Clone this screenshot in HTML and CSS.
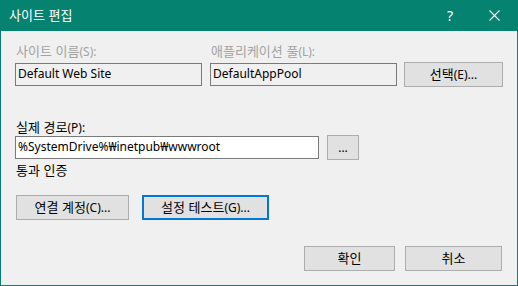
FILE: index.html
```html
<!DOCTYPE html>
<html lang="ko">
<head>
  <meta charset="UTF-8">
  <title>사이트 편집</title>
  <link rel="stylesheet" href="styles.css">
</head>
<body>
  <div class="window">
    <!-- Title bar -->
    <div class="titlebar">
      <span class="title"><span class="ko">사이트 편집</span></span>
      <span class="help">?</span>
      <svg class="close" width="11" height="11" viewBox="0 0 11 11">
        <path d="M0.5 0.5 L10.5 10.5 M10.5 0.5 L0.5 10.5" stroke="#fff" stroke-width="1.1" fill="none"/>
      </svg>
    </div>

    <div class="content">
      <!-- Site name / app pool -->
      <div class="top-row">
        <div class="field">
          <label class="disabled"><span class="ko">사이트 이름</span>(S):</label>
          <div class="textbox readonly">Default Web Site</div>
        </div>
        <div class="field">
          <label class="disabled"><span class="ko">애플리케이션 풀</span>(L):</label>
          <div class="textbox readonly">DefaultAppPool</div>
        </div>
        <button class="btn select-btn"><span class="ko">선택</span>(E)...</button>
      </div>

      <!-- Physical path -->
      <label class="path-label"><span class="ko">실제 경로</span>(P):</label>
      <div class="path-row">
        <div class="textbox path-box">%SystemDrive%₩inetpub₩wwwroot</div>
        <button class="btn browse-btn">...</button>
      </div>

      <label class="auth-label"><span class="ko">통과 인증</span></label>
      <div class="auth-row">
        <button class="btn connect-btn"><span class="ko">연결 계정</span>(C)...</button>
        <button class="btn test-btn focused"><span class="ko">설정 테스트</span>(G)...</button>
      </div>

      <div class="footer">
        <button class="btn ok-btn"><span class="ko">확인</span></button>
        <button class="btn cancel-btn"><span class="ko">취소</span></button>
      </div>
    </div>
  </div>
</body>
</html>
```

FILE: styles.css
```css
body {
  margin: 0;
  padding: 0;
  font-family: "Noto Sans", "Noto Sans CJK KR", sans-serif;
  font-size: 12px;
  color: #000;
  background: #f0f0f0;
}

/* Korean glyphs run a bit larger in the original UI font */
.ko {
  font-family: "Noto Sans CJK KR", sans-serif;
  font-size: 13px;
}

.window {
  width: 518px;
  height: 286px;
  box-sizing: border-box;
  border: 1px solid #058270;
  border-top: none;
  background: #f0f0f0;
}

/* Title bar */
.titlebar {
  height: 31px;
  margin: 0 -1px;
  background: #058270;
  color: #fff;
  display: flex;
  align-items: center;
  padding-left: 9px;
}

.title {
  flex: 1;
  line-height: 16px;
}

.help {
  font-family: "Noto Sans", sans-serif;
  font-size: 14px;
  margin-right: 36px;
  line-height: 16px;
}

.close {
  margin-right: 18px;
}

.content {
  padding: 12px 0 0 14px;
}

label {
  display: block;
  line-height: 16px;
  height: 16px;
}

.disabled {
  color: #a3a3a3;
}

.textbox {
  box-sizing: border-box;
  height: 23px;
  border: 1px solid #7a7a7a;
  background: #fff;
  line-height: 20px;
  padding-left: 2px;
  white-space: nowrap;
  overflow: hidden;
}

.textbox.readonly {
  background: #f0f0f0;
}

.btn {
  box-sizing: border-box;
  height: 25px;
  border: 1px solid #adadad;
  background: #e1e1e1;
  font-family: inherit;
  font-size: 12px;
  color: #000;
  padding: 0;
  line-height: 20px;
}

.btn.focused {
  border: 2px solid #0078d7;
}

/* Top row */
.top-row {
  display: grid;
  grid-template-columns: 187px 187px 98px;
  column-gap: 8px;
  align-items: end;
}

.top-row .field label {
  margin-bottom: 4px;
  padding-left: 1px;
}

.select-btn {
  margin-left: -1px;
  margin-bottom: -1px;
}

/* Path */
.path-label {
  margin-top: 33px;
  padding-left: 1px;
}

.path-row {
  display: flex;
  align-items: center;
  gap: 8px;
}

.path-box {
  width: 304px;
}

.browse-btn {
  width: 32px;
}

.auth-label {
  margin-top: 2px;
  padding-left: 1px;
}

.auth-row {
  display: flex;
  gap: 13px;
  margin-top: 17px;
  padding-left: 1px;
}

.connect-btn {
  width: 113px;
}

.test-btn {
  width: 127px;
}

.footer {
  display: flex;
  justify-content: flex-end;
  gap: 10px;
  margin-top: 26px;
  padding-right: 15px;
}

.ok-btn {
  width: 91px;
}

.cancel-btn {
  width: 97px;
}
```
